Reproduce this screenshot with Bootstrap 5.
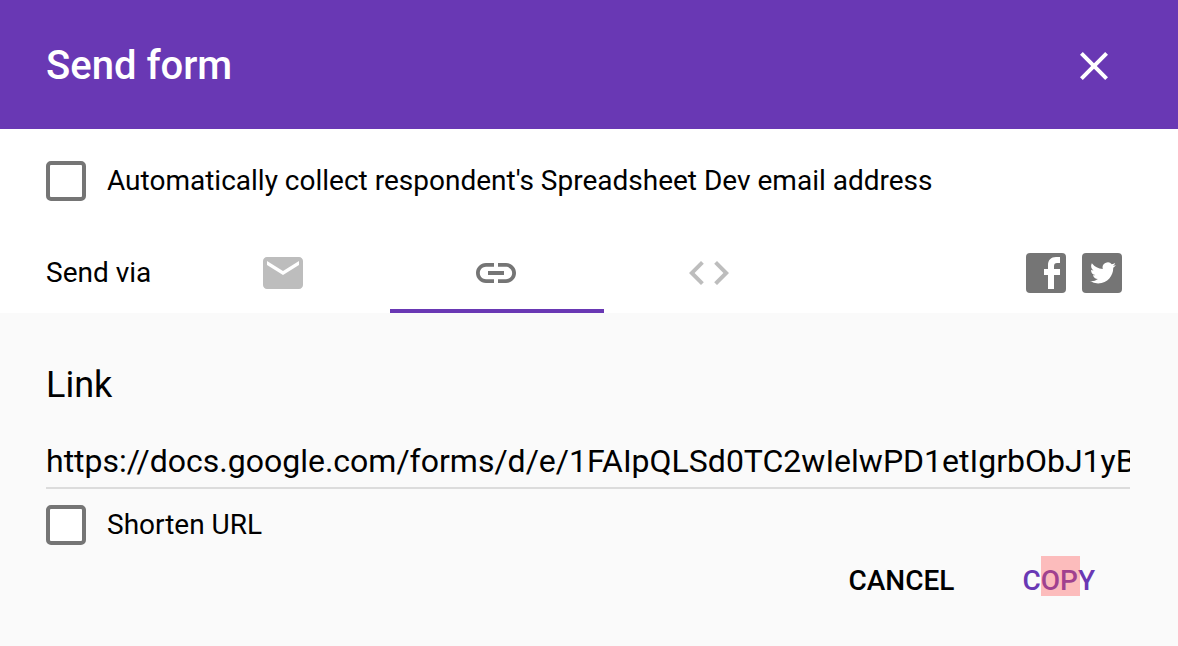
<!DOCTYPE html>
<html lang="en">
<head>
<meta charset="utf-8">
<meta name="viewport" content="width=device-width, initial-scale=1">
<title>Send form</title>
<link href="https://cdn.jsdelivr.net/npm/bootstrap@5.3.0/dist/css/bootstrap.min.css" rel="stylesheet">
<style>
  :root { --form-purple: #6938b4; --icon-gray: #757575; }
  body { font-family: Roboto, sans-serif; font-size: 28px; line-height: 40px; color: #000; }
  svg { display: block; fill: currentColor; }
  .px-dialog { padding-left: 46px; padding-right: 48px; }
  .dialog-header { background: var(--form-purple); padding-top: 42px; padding-bottom: 39px; }
  .dialog-title { font-size: 40px; font-weight: 500; line-height: 48px; }
  .btn-plain { font: inherit; line-height: 40px; border: 0; padding: 0; color: inherit; }
  .btn-close-dialog { margin-right: 12px; color: #fff; }
  .check-row { gap: 21px; }
  .check-row .form-check-input { width: 40px; height: 40px; margin: 0; border: 4px solid var(--icon-gray); border-radius: 5px; background-color: #fff; }
  .collect-row { padding-top: 32px; padding-bottom: 32px; }
  .via-label { width: 130px; }
  .via-tab { width: 213px; height: 80px; color: #bdbdbd; border-radius: 0; }
  .via-tab.active { color: var(--icon-gray); }
  .via-tab.active::after { content: ""; position: absolute; bottom: 0; left: 1px; right: -2px; height: 4px; background: var(--form-purple); }
  .share-links { margin-right: 8px; }
  .share-links a { color: var(--icon-gray); }
  .link-panel { background: #fafafa; padding-top: 48px; padding-bottom: 44px; }
  .link-title { font-size: 36px; line-height: 48px; font-weight: 400; }
  .link-field { font-size: 32px; line-height: 40px; margin-top: 32px; padding: 0 0 6px; border: 0; border-bottom: 2px solid #dcdcdc; border-radius: 0; background: transparent; color: #000; }
  .link-field:focus { background: transparent; box-shadow: none; border-color: #dcdcdc; color: #000; }
  .shorten-row { margin-top: 16px; }
  .dialog-actions { gap: 68px; margin-top: 16px; margin-right: 35px; font-weight: 500; }
  .copy-action { color: var(--form-purple); }
  .click-marker { top: -5px; left: 19px; width: 39px; height: 40px; background: rgba(255, 82, 82, .37); pointer-events: none; }
</style>
</head>
<body class="bg-white">
<main class="d-flex flex-column min-vh-100">
  <header class="dialog-header px-dialog d-flex align-items-center justify-content-between">
    <h1 class="dialog-title text-white mb-0">Send form</h1>
    <button type="button" class="btn btn-plain btn-close-dialog" aria-label="Close">
      <svg width="48" height="48" viewBox="0 0 24 24" aria-hidden="true"><path d="M19 6.41 17.59 5 12 10.59 6.41 5 5 6.41 10.59 12 5 17.59 6.41 19 12 13.41 17.59 19 19 17.59 13.41 12z"/></svg>
    </button>
  </header>

  <div class="check-row collect-row px-dialog d-flex align-items-center">
    <input class="form-check-input flex-shrink-0" type="checkbox" id="collectEmail">
    <label for="collectEmail">Automatically collect respondent's Spreadsheet Dev email address</label>
  </div>

  <div class="px-dialog d-flex align-items-center">
    <span class="via-label flex-shrink-0">Send via</span>
    <div class="d-flex" role="tablist" aria-label="Send via">
      <button type="button" class="btn btn-plain via-tab d-flex align-items-center justify-content-center" role="tab" aria-label="Email">
        <svg width="48" height="48" viewBox="0 0 24 24" aria-hidden="true"><path d="M20 4H4c-1.1 0-2 .9-2 2v12c0 1.1.9 2 2 2h16c1.1 0 2-.9 2-2V6c0-1.1-.9-2-2-2zm0 4-8 5-8-5V6l8 5 8-5z"/></svg>
      </button>
      <button type="button" class="btn btn-plain via-tab active position-relative d-flex align-items-center justify-content-center" role="tab" aria-selected="true" aria-label="Link">
        <svg width="48" height="48" viewBox="0 0 24 24" aria-hidden="true"><path d="M3.9 12c0-1.71 1.39-3.1 3.1-3.1h4V7H7c-2.76 0-5 2.24-5 5s2.24 5 5 5h4v-1.9H7c-1.71 0-3.1-1.39-3.1-3.1zM8 13h8v-2H8zm9-6h-4v1.9h4c1.71 0 3.1 1.39 3.1 3.1s-1.39 3.1-3.1 3.1h-4V17h4c2.76 0 5-2.24 5-5s-2.24-5-5-5z"/></svg>
      </button>
      <button type="button" class="btn btn-plain via-tab d-flex align-items-center justify-content-center" role="tab" aria-label="Embed HTML">
        <svg width="48" height="48" viewBox="0 0 24 24" aria-hidden="true"><path d="M9.4 16.6 4.8 12l4.6-4.6L8 6l-6 6 6 6zm5.2 0 4.6-4.6-4.6-4.6L16 6l6 6-6 6z"/></svg>
      </button>
    </div>
    <div class="share-links d-flex gap-3 ms-auto">
      <a href="#" aria-label="Share on Facebook">
        <svg width="40" height="40" viewBox="0 0 40 40" aria-hidden="true"><rect width="40" height="40" rx="4"/><path fill="#fff" d="M34 4v6h-3c-2 0-3 1-3 3v3h6v6h-6v14h-6V22h-4v-6h4v-4c0-5 3-8 8-8z"/></svg>
      </a>
      <a href="#" aria-label="Share on Twitter">
        <svg width="40" height="40" viewBox="0 0 40 40" aria-hidden="true"><rect width="40" height="40" rx="4"/><path fill="#fff" transform="translate(8 7) scale(1.08)" d="M24 4.6a10 10 0 0 1-2.8.8 5 5 0 0 0 2.1-2.7 10 10 0 0 1-3.1 1.2 4.9 4.9 0 0 0-8.4 4.5A14 14 0 0 1 1.7 3.1a4.9 4.9 0 0 0 1.5 6.6 4.9 4.9 0 0 1-2.2-.6v.1a4.9 4.9 0 0 0 3.9 4.8 5 5 0 0 1-2.2.1 4.9 4.9 0 0 0 4.6 3.4A9.9 9.9 0 0 1 0 19.5a14 14 0 0 0 7.5 2.2c9.1 0 14-7.5 14-14v-.6A10 10 0 0 0 24 4.6z"/></svg>
      </a>
    </div>
  </div>

  <section class="link-panel px-dialog flex-grow-1">
    <h2 class="link-title mb-0"><label for="formLink">Link</label></h2>
    <input type="text" class="form-control link-field" id="formLink" readonly value="https://docs.google.com/forms/d/e/1FAIpQLSd0TC2wIelwPD1etIgrbObJ1yB">
    <div class="check-row shorten-row d-flex align-items-center">
      <input class="form-check-input flex-shrink-0" type="checkbox" id="shortenUrl">
      <label for="shortenUrl">Shorten URL</label>
    </div>
    <div class="dialog-actions d-flex justify-content-end">
      <button type="button" class="btn btn-plain">CANCEL</button>
      <button type="button" class="btn btn-plain copy-action position-relative">COPY<span class="click-marker position-absolute"></span></button>
    </div>
  </section>
</main>
<script src="https://cdn.jsdelivr.net/npm/bootstrap@5.3.0/dist/js/bootstrap.bundle.min.js"></script>
</body>
</html>
